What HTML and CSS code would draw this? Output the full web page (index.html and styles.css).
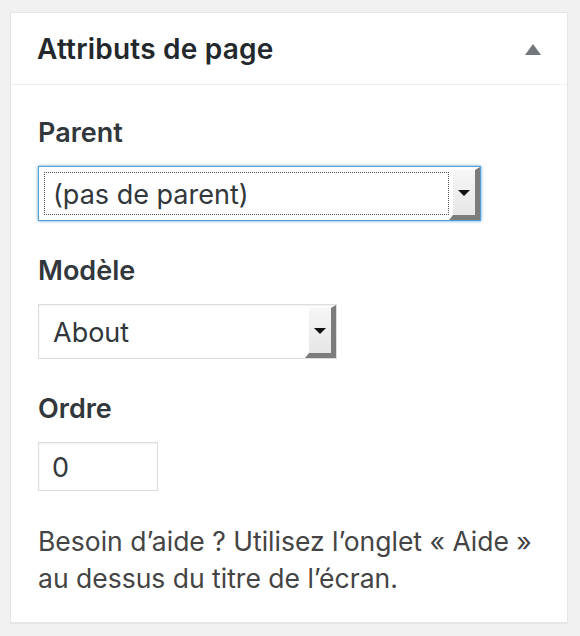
FILE: index.html
```html
<!DOCTYPE html>
<html lang="fr">
<head>
<meta charset="utf-8">
<title>Attributs de page</title>
<link rel="stylesheet" href="styles.css">
</head>
<body>
<div class="postbox">
  <div class="postbox-header">
    <h2 class="postbox-title">Attributs de page</h2>
    <span class="toggle-arrow" aria-hidden="true"></span>
  </div>
  <div class="inside">
    <p class="field-label">Parent</p>
    <div class="select select-parent is-focused">
      <span class="select-value"><span class="focus-ring">(pas de parent)</span></span>
      <span class="select-button"><span class="caret"></span></span>
    </div>
    <p class="field-label">Modèle</p>
    <div class="select select-template">
      <span class="select-value"><span class="plain">About</span></span>
      <span class="select-button"><span class="caret"></span></span>
    </div>
    <p class="field-label">Ordre</p>
    <div class="text-input">0</div>
    <p class="help">Besoin d’aide ? Utilisez l’onglet « Aide » au dessus du titre de l’écran.</p>
  </div>
</div>
</body>
</html>
```

FILE: styles.css
```css
html, body {
  margin: 0;
  padding: 0;
}
body {
  background: #f1f1f1;
  font-family: Inter, "Noto Sans", "Liberation Sans", sans-serif;
  color: #444;
  padding: 12px 12px 13px 10px;
}
.postbox {
  background: #fff;
  border: 1px solid #e5e5e5;
  box-shadow: 0 1px 1px rgba(0,0,0,.04);
  width: 556px;
}
.postbox-header {
  display: flex;
  align-items: center;
  justify-content: space-between;
  height: 71px;
  padding: 0 26px 0 26px;
  border-bottom: 1px solid #eee;
}
.postbox-title {
  margin: 0;
  font-size: 28px;
  font-weight: 600;
  color: #23282d;
  letter-spacing: 0.2px;
}
.toggle-arrow {
  width: 0;
  height: 0;
  border-left: 8px solid transparent;
  border-right: 8px solid transparent;
  border-bottom: 11px solid #72777c;
  margin-top: 2px;
}
.inside {
  padding: 29px 26px 25px 27px;
}
.field-label {
  margin: 0 0 14px;
  font-size: 27px;
  font-weight: 600;
  color: #32373c;
  line-height: 38px;
}
.select {
  display: flex;
  box-sizing: border-box;
  height: 55px;
  border: 1px solid #ddd;
  box-shadow: inset 0 1px 2px rgba(0,0,0,.07);
  background: #fff;
  margin-bottom: 31px;
}
.select-parent { width: 443px; }
.select-template { width: 299px; }
.select.is-focused {
  border-color: #5b9dd9;
  box-shadow: 0 0 3px rgba(30,140,190,.8);
}
.select-value {
  flex: 1;
  display: flex;
  padding: 5px 0 5px 5px;
  font-size: 27px;
  color: #32373c;
}
.focus-ring {
  flex: 1;
  display: flex;
  align-items: center;
  padding-left: 8px;
  padding-top: 2px;
  border: 1px dotted #555;
}
.plain {
  display: flex;
  align-items: center;
  padding-left: 9px;
  padding-top: 2px;
}
.select-button {
  box-sizing: border-box;
  width: 31px;
  display: flex;
  align-items: center;
  justify-content: center;
  background: linear-gradient(#f6f6f6, #e6e6e6);
  background-clip: padding-box;
  border-left: 4px solid transparent;
  border-top: 3px solid transparent;
  border-right: 5px solid #7c7c7c;
  border-bottom: 5px solid #7c7c7c;
}
.caret {
  width: 0;
  height: 0;
  border-left: 6px solid transparent;
  border-right: 6px solid transparent;
  border-top: 6px solid #111;
}
.text-input {
  box-sizing: border-box;
  width: 120px;
  height: 49px;
  border: 1px solid #ddd;
  box-shadow: inset 0 1px 2px rgba(0,0,0,.07);
  padding: 2px 13px 0;
  display: flex;
  align-items: center;
  font-size: 27px;
  color: #32373c;
  margin-bottom: 32px;
}
.help {
  margin: 0;
  font-size: 26.5px;
  line-height: 37px;
  color: #444;
}
```
